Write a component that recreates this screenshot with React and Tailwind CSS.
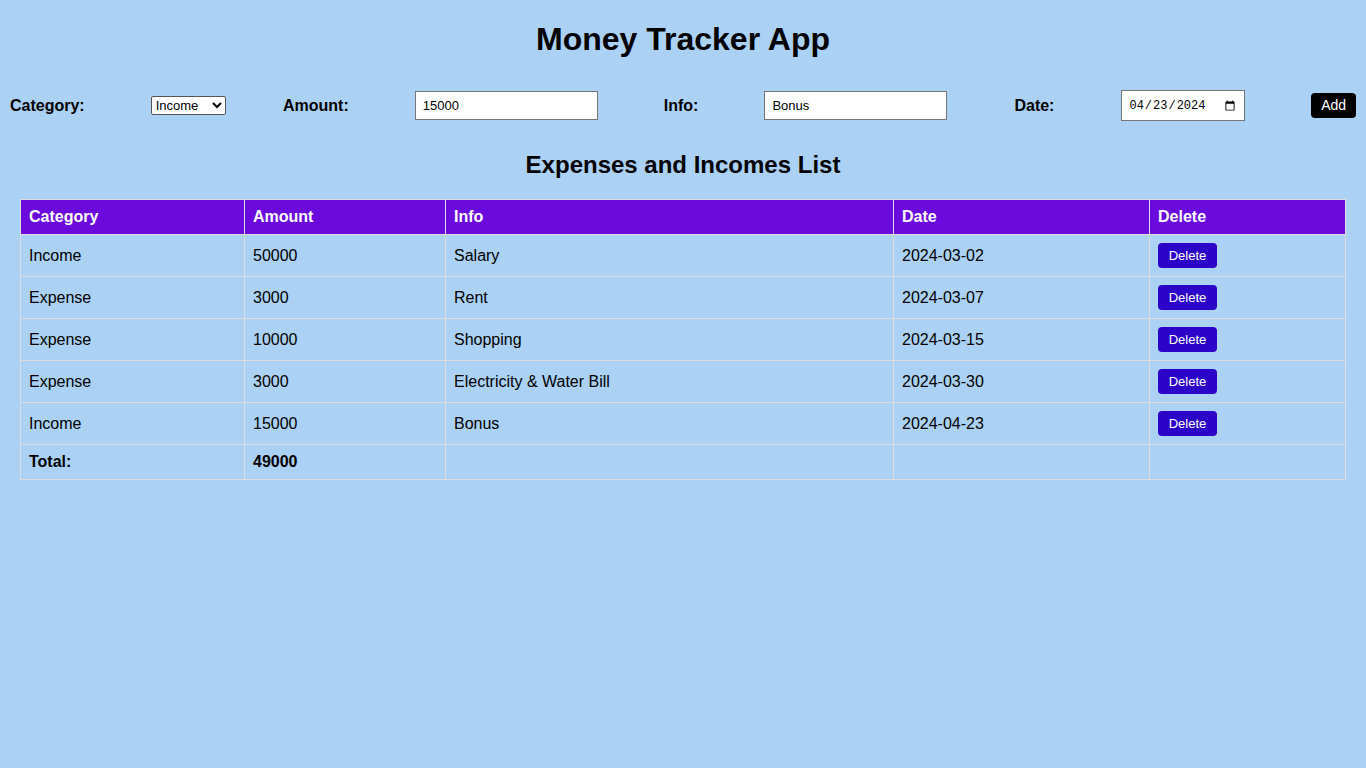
import { useState } from "react";

const initial = [
  { category: "Income", amount: 50000, info: "Salary", date: "2024-03-02" },
  { category: "Expense", amount: 3000, info: "Rent", date: "2024-03-07" },
  { category: "Expense", amount: 10000, info: "Shopping", date: "2024-03-15" },
  { category: "Expense", amount: 3000, info: "Electricity & Water Bill", date: "2024-03-30" },
  { category: "Income", amount: 15000, info: "Bonus", date: "2024-04-23" },
];

export default function App() {
  const [items, setItems] = useState(initial);
  const [category, setCategory] = useState("Income");
  const [amount, setAmount] = useState("15000");
  const [info, setInfo] = useState("Bonus");
  const [date, setDate] = useState("2024-04-23");

  const total = items.reduce(
    (sum, it) => (it.category === "Income" ? sum + it.amount : sum - it.amount),
    0
  );

  const onAdd = () => {
    if (!amount || !info || !date) return;
    setItems([...items, { category, amount: Number(amount), info, date }]);
  };

  const onDelete = (i) => setItems(items.filter((_, idx) => idx !== i));

  const th = "border border-[#dddddd] px-2 py-2 text-left font-bold leading-[18px]";
  const td = "border border-[#dddddd] px-2 py-2 leading-[18px]";

  return (
    <div className="min-h-screen bg-[#abd1f5] pb-6 font-['Liberation_Sans',Arial,sans-serif] text-[16px] text-black">
      <h1 className="pt-[21px] pb-[22px] text-center text-[32px] leading-[37px] font-bold">
        Money Tracker App
      </h1>

      <div className="mt-[10px] flex items-center px-[10px]">
        <label className="font-bold">Category:</label>
        <select
          value={category}
          onChange={(e) => setCategory(e.target.value)}
          className="ml-[66px] h-[19px] w-[76px] rounded-[2px] border border-[#555555] bg-white text-[13px]"
        >
          <option>Income</option>
          <option>Expense</option>
        </select>
        <label className="ml-[57px] font-bold">Amount:</label>
        <input
          className="ml-[66px] h-[29px] w-[183px] border border-[#767676] bg-white px-[7px] text-[13px] outline-none"
          value={amount}
          onChange={(e) => setAmount(e.target.value)}
        />
        <label className="ml-[66px] font-bold">Info:</label>
        <input
          className="ml-[66px] h-[29px] w-[183px] border border-[#767676] bg-white px-[7px] text-[13px] outline-none"
          value={info}
          onChange={(e) => setInfo(e.target.value)}
        />
        <label className="ml-[67px] font-bold">Date:</label>
        <input
          type="date"
          className="ml-[67px] h-[31px] w-[125px] border border-[#767676] bg-white px-[6px] font-['Liberation_Mono',monospace] text-[12px] outline-none"
          value={date}
          onChange={(e) => setDate(e.target.value)}
        />
        <button
          onClick={onAdd}
          className="ml-[66px] h-[25px] w-[45px] rounded-[4px] bg-black text-[14px] text-white"
        >
          Add
        </button>
      </div>

      <h2 className="mt-[30px] text-center text-[24px] leading-[28px] font-bold">
        Expenses and Incomes List
      </h2>

      <div className="mt-[20px] px-[20px]">
        <table className="w-full border-collapse">
          <thead>
            <tr className="bg-[#6a0add] text-white">
              <th className={th + " w-[224px]"}>Category</th>
              <th className={th + " w-[201px]"}>Amount</th>
              <th className={th + " w-[448px]"}>Info</th>
              <th className={th + " w-[256px]"}>Date</th>
              <th className={th}>Delete</th>
            </tr>
          </thead>
          <tbody>
            {items.map((it, i) => (
              <tr key={i}>
                <td className={td}>{it.category}</td>
                <td className={td}>{it.amount}</td>
                <td className={td}>{it.info}</td>
                <td className={td}>{it.date}</td>
                <td className={td}>
                  <button
                    onClick={() => onDelete(i)}
                    className="block h-[25px] w-[59px] rounded-[4px] bg-[#2c03c8] text-[13px] text-white"
                  >
                    Delete
                  </button>
                </td>
              </tr>
            ))}
            <tr>
              <td className={td + " font-bold"}>Total:</td>
              <td className={td + " font-bold"}>{total}</td>
              <td className={td}></td>
              <td className={td}></td>
              <td className={td}></td>
            </tr>
          </tbody>
        </table>
      </div>
    </div>
  );
}
